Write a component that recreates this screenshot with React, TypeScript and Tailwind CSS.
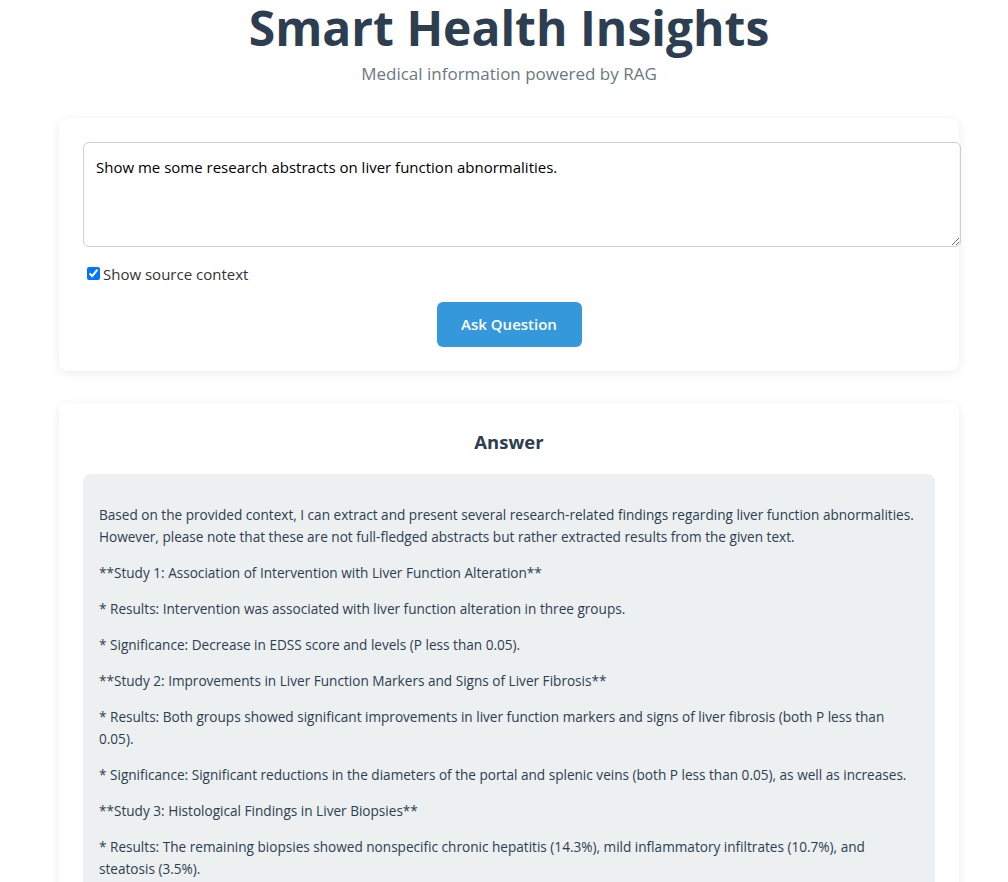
const paragraphs: string[] = [
  'Based on the provided context, I can extract and present several research-related findings regarding liver function abnormalities. However, please note that these are not full-fledged abstracts but rather extracted results from the given text.',
  '**Study 1: Association of Intervention with Liver Function Alteration**',
  '* Results: Intervention was associated with liver function alteration in three groups.',
  '* Significance: Decrease in EDSS score and levels (P less than 0.05).',
  '**Study 2: Improvements in Liver Function Markers and Signs of Liver Fibrosis**',
  '* Results: Both groups showed significant improvements in liver function markers and signs of liver fibrosis (both P less than 0.05).',
  '* Significance: Significant reductions in the diameters of the portal and splenic veins (both P less than 0.05), as well as increases.',
  '**Study 3: Histological Findings in Liver Biopsies**',
  '* Results: The remaining biopsies showed nonspecific chronic hepatitis (14.3%), mild inflammatory infiltrates (10.7%), and steatosis (3.5%).',
  '**Study 4: Liver Enzyme Changes After Treatment**',
];

export default function App() {
  return (
    <div className="min-h-screen bg-white font-['Open_Sans',sans-serif] text-[#2c3e50]">
      <main className="ml-[59px] w-[900px]">
        {/* Header */}
        <header className="text-center">
          <h1 className="text-[48px] font-bold leading-[56px] text-[#2c3e50]">Smart Health Insights</h1>
          <p className="mt-[5px] text-[17px] text-[#6b7780]">Medical information powered by RAG</p>
        </header>

        {/* Question card */}
        <section className="mt-[31px] rounded-lg bg-white p-6 shadow-[0_2px_10px_rgba(0,0,0,0.08)]">
          <textarea
            className="block w-[878px] h-[105px] resize-y rounded-md border border-[#cfcfcf] px-3 py-[12px] text-[15px] leading-[24px] text-black outline-none"
            defaultValue="Show me some research abstracts on liver function abnormalities."
          />
          <label className="mt-[16px] ml-1 flex items-center text-[15px] text-[#333]">
            <input type="checkbox" defaultChecked className="h-[13px] w-[13px] accent-[#0075ff]" />
            <span className="ml-[3px]">Show source context</span>
          </label>
          <div className="mt-[17px] flex justify-center">
            <button className="h-[45px] w-[145px] rounded-md bg-[#3498db] text-[15px] font-semibold text-white">
              Ask Question
            </button>
          </div>
        </section>

        {/* Answer card */}
        <section className="mt-8 rounded-lg bg-white px-6 pt-6 pb-6 shadow-[0_2px_10px_rgba(0,0,0,0.08)]">
          <h2 className="text-center text-[18.5px] font-bold leading-[30px] text-[#2c3e50]">Answer</h2>
          <div className="mt-[17px] rounded-lg bg-[#ecf0f1] px-4 pt-[30px] pb-4 text-[13.6px] leading-[22px] text-[#2c3e50]">
            {paragraphs.map((p, i) => (
              <p key={i} className="mb-[14px]">{p}</p>
            ))}
          </div>
        </section>
      </main>
    </div>
  );
}
